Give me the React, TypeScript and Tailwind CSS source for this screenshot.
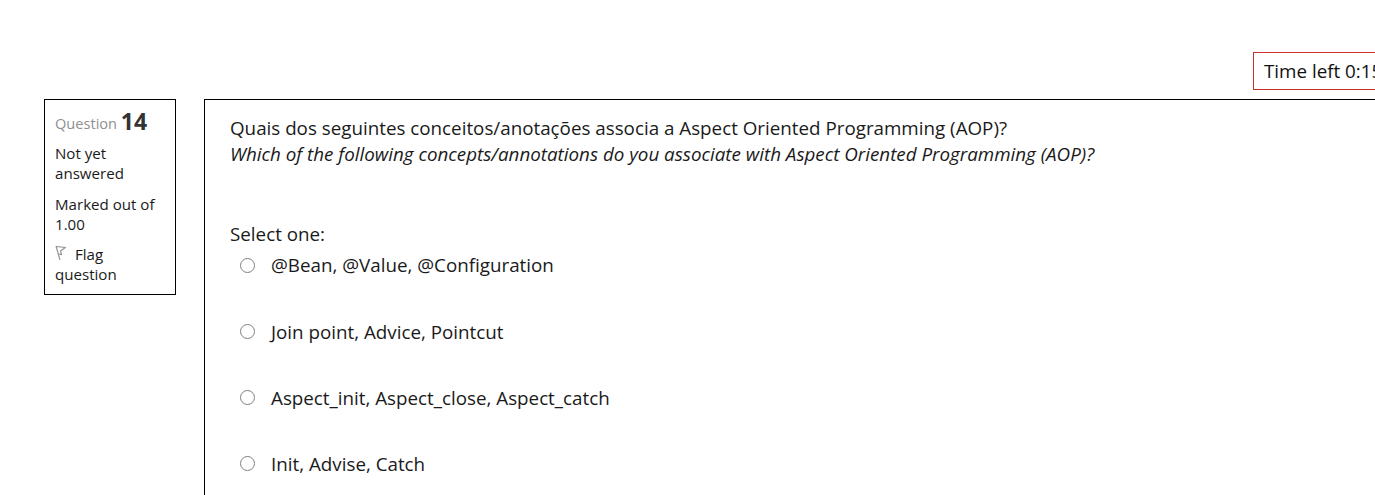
import React from "react"

const options = [
  "@Bean, @Value, @Configuration",
  "Join point, Advice, Pointcut",
  "Aspect_init, Aspect_close, Aspect_catch",
  "Init, Advise, Catch",
]

function FlagIcon() {
  return (
    <svg width="11" height="16" viewBox="0 0 11 16" fill="none" stroke="#8f8f8f" strokeWidth="1.1" className="inline-block align-[-1px]">
      <path d="M1 1 L5 15" />
      <path d="M1 1.5 L10.5 2.5 L5.5 6 L6.5 9.5 L3.2 9" />
    </svg>
  )
}

export default function App() {
  return (
    <div className="w-[1375px] h-[495px] overflow-hidden bg-white text-[#1a1a1a] font-['Open_Sans',sans-serif]">
      <div className="flex justify-start pt-[52px] pl-[1253px]">
        <div className="shrink-0 w-[200px] h-[38px] border border-[#c9302c] pl-[10px] text-[18.8px] leading-[36px] text-[#111] whitespace-nowrap overflow-hidden">
          Time left 0:15:32
        </div>
      </div>

      <div className="flex items-start mt-[9px] ml-[44px]">
        <div className="shrink-0 w-[132px] h-[196px] border border-black pl-[10px] pt-[6px] text-[15.1px] leading-[20px] text-[#1a1a1a]">
          <h3 className="text-[#8f8f8f] text-[14.6px] leading-[30px] mb-[5px]">
            Question <span className="text-[23px] font-bold text-[#333] align-[-1px]">14</span>
          </h3>
          <div className="mb-[11px]">
            Not yet
            <br />
            answered
          </div>
          <div className="mb-[10px]">
            Marked out of
            <br />
            1.00
          </div>
          <div>
            <FlagIcon /> <span className="ml-[5px]">Flag</span>
            <br />
            question
          </div>
        </div>

        <div className="shrink-0 ml-[28px] w-[1300px] h-[500px] border border-black pl-[25px] pt-[15px] text-[18.8px] leading-[26px]">
          <p>Quais dos seguintes conceitos/anotações associa a Aspect Oriented Programming (AOP)?</p>
          <p className="italic">Which of the following concepts/annotations do you associate with Aspect Oriented Programming (AOP)?</p>

          <div className="mt-[54px]">Select one:</div>
          <div className="flex flex-col gap-[40.2px] mt-[5.4px]">
            {options.map((option) => (
              <label key={option} className="flex items-center h-[26px]">
                <input type="radio" name="answer" className="appearance-none shrink-0 ml-[10px] mr-[16px] w-[15px] h-[15px] rounded-full border-[1.5px] border-[#808080] bg-white" />
                {option}
              </label>
            ))}
          </div>
        </div>
      </div>
    </div>
  )
}
